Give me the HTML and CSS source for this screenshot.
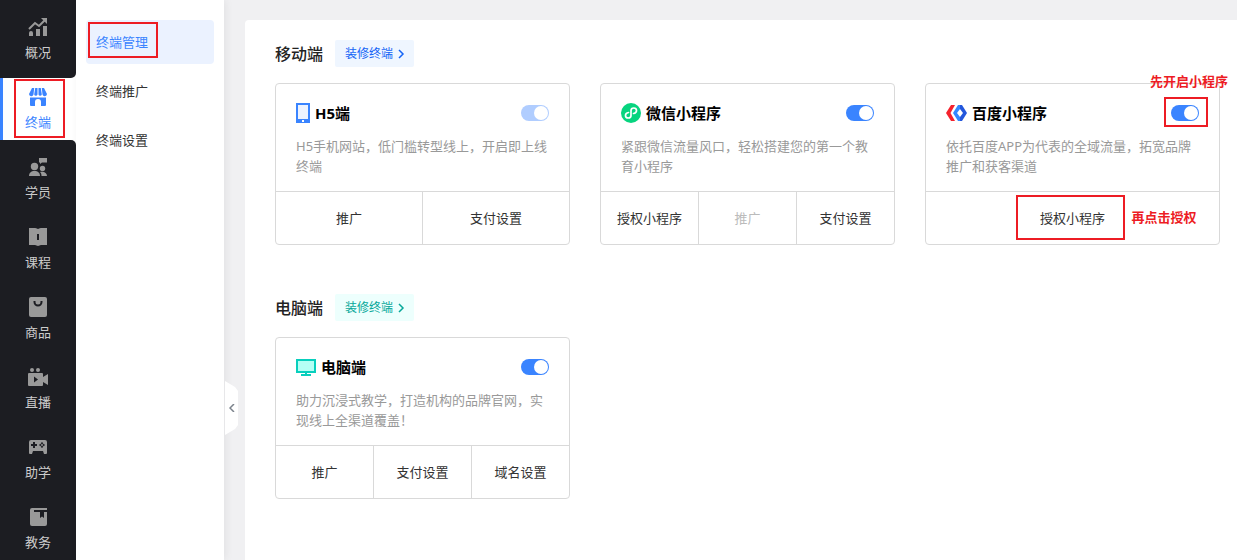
FILE: index.html
```
<!DOCTYPE html>
<html lang="zh-CN">
<head>
    <meta charset="UTF-8">
    <meta name="viewport" content="width=device-width, initial-scale=1.0">
    <title>终端管理</title>
    <link rel="stylesheet" href="styles.css">
</head>
<body>
    <nav class="sidebar">
        <ul>
            <li>
                <a href="#">
                    <svg width="20" height="20" viewBox="0 0 20 20" fill="currentColor">
                        <path d="M1 16a2 2 0 0 1 4 0v3H1zM8 12h4v7H8zM15 9h4v10h-4z"/>
                        <path d="M1 12l6-6 4 3 6-6" fill="none" stroke="currentColor" stroke-width="2"/>
                        <path d="M13 1h6v6z"/>
                    </svg>
                    <span>概况</span>
                </a>
            </li>
            <li class="active">
                <a href="#">
                    <svg width="20" height="20" viewBox="0 0 20 20" fill="currentColor">
                        <path d="M4 1h2.200L5.500 7.500A2.300 2.300 0 0 1 1 7zM7.200 1h2.300v6.500a1.700 1.700 0 0 1-3.300 0zM10.500 1h2.300l1 6.500a1.700 1.700 0 0 1-3.300 0zM13.800 1H16l3 6a2.300 2.300 0 0 1-4.500.500z"/>
                        <path d="M2 10.500h16V18a1 1 0 0 1-1 1h-4v-4a3 3 0 0 0-6 0v4H3a1 1 0 0 1-1-1z"/>
                    </svg>
                    <span>终端</span>
                </a>
                <div class="mark mark-nav"></div>
            </li>
            <li>
                <a href="#">
                    <svg width="20" height="20" viewBox="0 0 20 20" fill="currentColor">
                        <circle cx="6.500" cy="9.500" r="3.700"/>
                        <path d="M1 19c0-3 2-5 5.500-5s5.500 2 5.500 5z"/>
                        <circle cx="14.500" cy="11.500" r="2.700"/>
                        <path d="M12 15c4-1 7 1 7 4h-5.500c0-2-.5-3-1.500-4zM11 1h8v4.500h-5L12 7V5.500h-1z"/>
                    </svg>
                    <span>学员</span>
                </a>
            </li>
            <li>
                <a href="#">
                    <svg width="20" height="20" viewBox="0 0 20 20" fill="currentColor">
                        <path fill-rule="evenodd" d="M1 1h6c2 0 2 1 3 1s1-1 3-1h6v17h-6l-3 1-3-1H1zM9 7v6h2V7z"/>
                    </svg>
                    <span>课程</span>
                </a>
            </li>
            <li>
                <a href="#">
                    <svg width="20" height="20" viewBox="0 0 20 20" fill="currentColor">
                        <rect x="1" width="18" height="20" rx="2"/>
                        <path class="cut-line" d="M6.500 4v1a3.500 3.500 0 0 0 7 0V4"/>
                    </svg>
                    <span>商品</span>
                </a>
            </li>
            <li>
                <a href="#">
                    <svg width="20" height="20" viewBox="0 0 20 20" fill="currentColor">
                        <circle cx="4" cy="3" r="2"/>
                        <circle cx="10" cy="3" r="2"/>
                        <path fill-rule="evenodd" d="M1 6h13a1 1 0 0 1 1 1v3l5-3v11l-5-3v3a1 1 0 0 1-1 1H1a1 1 0 0 1-1-1V7a1 1 0 0 1 1-1zM6 9.500v6l4-3z"/>
                    </svg>
                    <span>直播</span>
                </a>
            </li>
            <li>
                <a href="#">
                    <svg width="20" height="20" viewBox="0 0 20 20" fill="currentColor">
                        <path d="M3 3h14a2 2 0 0 1 2 2v11a1 1 0 0 1-1 1h-2l-1-3H5l-1 3H2a1 1 0 0 1-1-1V5a2 2 0 0 1 2-2z"/>
                        <path class="cut-line" d="M3 8h6M6 5v6"/>
                        <path class="cut" d="M14 5l1.300 1.300L14 7.600l-1.300-1.300zM14 8.400l1.300 1.300L14 11l-1.300-1.300zM12.300 6.700L13.600 8l-1.300 1.300L11 8zM15.700 6.700L17 8l-1.300 1.300L14.400 8z"/>
                    </svg>
                    <span>助学</span>
                </a>
            </li>
            <li>
                <a href="#">
                    <svg width="20" height="20" viewBox="0 0 20 20" fill="currentColor">
                        <path d="M4 1h15v16a2 2 0 0 1-2 2H4a2 2 0 0 1-2-2V3a2 2 0 0 1 2-2z"/>
                        <path class="cut" d="M6 3h13v2h-3v6l-2-1.500-2 1.500V5H6z"/>
                    </svg>
                    <span>教务</span>
                </a>
            </li>
        </ul>
    </nav>

    <nav class="submenu">
        <a href="#" class="current">终端管理</a>
        <a href="#">终端推广</a>
        <a href="#">终端设置</a>
        <div class="mark mark-submenu"></div>
        <button type="button" class="collapse" aria-label="收起">
            <svg width="6" height="8" viewBox="0 0 6 8"><path d="M5 0L1 4l4 4" fill="none" stroke="#7c838c" stroke-width="1.500"/></svg>
        </button>
    </nav>

    <main class="content">
        <section>
            <header class="section-head">
                <h2>移动端</h2>
                <a href="#" class="decorate">装修终端
                    <svg width="7" height="10" viewBox="0 0 7 10"><path d="M1 1l4 4-4 4" fill="none" stroke="currentColor" stroke-width="1.500"/></svg>
                </a>
            </header>
            <div class="cards">
                <article class="card">
                    <div class="card-body">
                        <div class="card-title">
                            <svg width="14" height="20" viewBox="0 0 14 20">
                                <path fill="#3a84ff" d="M0 0h14v20H0z"/>
                                <path fill="#edf3ff" d="M2 2h10v14H2z"/>
                                <path fill="#fff" d="M6 17h2v2H6z"/>
                            </svg>
                            <h3>H5端</h3>
                            <input type="checkbox" class="switch" aria-label="H5端" checked disabled>
                        </div>
                        <p>H5手机网站，低门槛转型线上，开启即上线终端</p>
                    </div>
                    <div class="card-actions">
                        <button type="button">推广</button>
                        <button type="button">支付设置</button>
                    </div>
                </article>

                <article class="card">
                    <div class="card-body">
                        <div class="card-title">
                            <svg width="20" height="20" viewBox="0 0 20 20">
                                <circle cx="10" cy="10" r="10" fill="#07d47f"/>
                                <path d="M7.500 9.500C5.500 9.800 4.500 11 4.500 12.500c0 1.400 1.200 2.500 2.700 2.500s2.800-1.100 2.800-2.500v-5C10 6.100 11.300 5 12.800 5s2.700 1.100 2.700 2.500c0 1.500-1 2.700-3 3" fill="none" stroke="#fff" stroke-width="1.700" stroke-linecap="round"/>
                            </svg>
                            <h3>微信小程序</h3>
                            <input type="checkbox" class="switch" aria-label="微信小程序" checked>
                        </div>
                        <p>紧跟微信流量风口，轻松搭建您的第一个教育小程序</p>
                    </div>
                    <div class="card-actions">
                        <button type="button">授权小程序</button>
                        <button type="button" disabled>推广</button>
                        <button type="button">支付设置</button>
                    </div>
                </article>

                <article class="card">
                    <div class="card-body">
                        <div class="card-title">
                            <svg width="21" height="16" viewBox="0 0 21 16">
                                <path fill="#f5222d" d="M5 0h4L4.500 8 9 16H5L0 8z"/>
                                <path fill="#3388ff" d="M14 0h-2L7 8l5 8h2v-4l-3-4 3-4z"/>
                                <path fill="#2357dc" d="M14 0h2l5 8-5 8h-2v-4l3-4-3-4z"/>
                            </svg>
                            <h3>百度小程序</h3>
                            <div class="marked">
                                <input type="checkbox" class="switch" aria-label="百度小程序" checked>
                                <div class="mark mark-switch"></div>
                                <strong class="note note-top">先开启小程序</strong>
                            </div>
                        </div>
                        <p>依托百度APP为代表的全域流量，拓宽品牌推广和获客渠道</p>
                    </div>
                    <div class="card-actions">
                        <button type="button">授权小程序</button>
                        <div class="mark mark-action"></div>
                        <strong class="note note-side">再点击授权</strong>
                    </div>
                </article>
            </div>
        </section>

        <section>
            <header class="section-head">
                <h2>电脑端</h2>
                <a href="#" class="decorate green">装修终端
                    <svg width="7" height="10" viewBox="0 0 7 10"><path d="M1 1l4 4-4 4" fill="none" stroke="currentColor" stroke-width="1.500"/></svg>
                </a>
            </header>
            <div class="cards">
                <article class="card">
                    <div class="card-body">
                        <div class="card-title">
                            <svg width="20" height="17" viewBox="0 0 20 17">
                                <path fill="#08cfbd" d="M0 0h20v14h-9v1h4v2H5v-2h4v-1H0z"/>
                                <path fill="#b5fff5" d="M2 2h16v10H2z"/>
                            </svg>
                            <h3>电脑端</h3>
                            <input type="checkbox" class="switch" aria-label="电脑端" checked>
                        </div>
                        <p>助力沉浸式教学，打造机构的品牌官网，实现线上全渠道覆盖！</p>
                    </div>
                    <div class="card-actions">
                        <button type="button">推广</button>
                        <button type="button">支付设置</button>
                        <button type="button">域名设置</button>
                    </div>
                </article>
            </div>
        </section>
    </main>
</body>
</html>
```

FILE: styles.css
```
* {
    box-sizing: border-box;
}

body {
    display: flex;
    min-height: 100vh;
    margin: 0;
    background-color: #f0f0f2;
    color: #333;
    font-family: "Noto Sans", "Noto Sans CJK SC", sans-serif;
    font-size: 13px;
    line-height: 20px;
}

h2, h3, p, ul {
    margin: 0;
    padding: 0;
}

a {
    color: inherit;
    text-decoration: none;
}

button {
    padding: 0;
    border: 0;
    background: none;
    color: inherit;
    font: inherit;
    cursor: pointer;
}

/* main navigation */
.sidebar {
    display: flex;
    flex-direction: column;
    flex: 0 0 76px;
    background-color: #fff;
}

.sidebar::after {
    content: "";
    flex: 1;
    background-color: #1c1d22;
}

.sidebar ul {
    list-style: none;
}

.sidebar li {
    position: relative;
    padding-top: 8px;
    background-color: #1c1d22;
    color: #ccc;
}

.sidebar li:has(+ .active) {
    padding-bottom: 8px;
    border-bottom-right-radius: 5px;
}

.sidebar .active {
    padding-top: 0;
    border-left: 3px solid #3a84ff;
    background-color: #fff;
    color: #3a84ff;
}

.sidebar .active + li {
    border-top-right-radius: 5px;
}

.sidebar li a {
    display: flex;
    flex-direction: column;
    align-items: center;
    gap: 5px;
    height: 62px;
    padding-top: 9px;
}

.sidebar .active a {
    margin-left: -3px;
}

.sidebar svg {
    color: #999;
}

.sidebar .active svg {
    color: #3a84ff;
}

.sidebar .cut {
    fill: #1c1d22;
}

.sidebar .cut-line {
    fill: none;
    stroke: #1c1d22;
    stroke-width: 2;
}

/* second level */
.submenu {
    position: relative;
    display: flex;
    flex-direction: column;
    gap: 5px;
    flex: 0 0 148px;
    padding: 20px 10px;
    background-color: #fff;
    box-shadow: 2px 0 8px rgba(0, 0, 0, 0.06);
}

.submenu a {
    padding: 12px 10px;
    border-radius: 4px;
}

.submenu .current {
    background-color: #ebf2ff;
    color: #3a84ff;
}

.collapse {
    position: absolute;
    top: 381px;
    left: 149px;
    display: flex;
    align-items: center;
    justify-content: center;
    width: 13px;
    height: 54px;
    background-color: #fff;
    clip-path: polygon(0 0, 10px 6px, 13px 10px, 13px 44px, 10px 48px, 0 100%);
}

/* content */
.content {
    display: flex;
    flex-direction: column;
    gap: 49px;
    flex: 1;
    min-width: 0;
    margin: 20px 0 0 21px;
    padding: 20px 17px 30px 30px;
    border-top-left-radius: 4px;
    background-color: #fff;
}

.section-head {
    display: flex;
    align-items: center;
    gap: 12px;
    margin-bottom: 16px;
}

.section-head h2 {
    color: #222;
    font-size: 16px;
    font-weight: 500;
}

.decorate {
    display: flex;
    align-items: center;
    gap: 5px;
    height: 27px;
    padding: 0 9px 0 10px;
    border-radius: 2px;
    background-color: #eff6ff;
    color: #1464f6;
    font-size: 12px;
}

.decorate.green {
    background-color: #edfffd;
    color: #08a89a;
}

.cards {
    display: grid;
    grid-template-columns: repeat(3, 1fr);
    gap: 30px;
}

.card {
    border: 1px solid #d9d9d9;
    border-radius: 4px;
}

.card-body {
    padding: 19px 20px 15px;
}

.card-title {
    display: flex;
    align-items: center;
    gap: 5px;
    margin-bottom: 13px;
}

.card-title h3 {
    flex: 1;
    color: #000;
    font-size: 15px;
    font-weight: 700;
}

.card p {
    color: #999;
}

.switch {
    display: block;
    width: 28px;
    height: 16px;
    margin: 0;
    padding: 1px;
    border-radius: 8px;
    background-color: #3a84ff;
    appearance: none;
    cursor: pointer;
}

.switch::before {
    content: "";
    display: block;
    width: 14px;
    height: 14px;
    border-radius: 50%;
    background-color: #fff;
}

.switch:checked::before {
    margin-left: auto;
}

.switch:disabled {
    background-color: #b0cdff;
}

.card-actions {
    position: relative;
    display: flex;
    height: 53px;
    border-top: 1px solid #d9d9d9;
}

.card-actions button {
    flex: 1;
}

.card-actions button + button {
    border-left: 1px solid #d9d9d9;
}

.card-actions button:disabled {
    color: #bbb;
}

/* guide marks drawn over the page */
.mark {
    position: absolute;
    border: 2px solid #ed1c24;
    pointer-events: none;
}

.mark-nav {
    top: 1px;
    left: 11px;
    width: 51px;
    height: 59px;
}

.mark-submenu {
    top: 22px;
    left: 12px;
    width: 70px;
    height: 36px;
}

.marked {
    position: relative;
}

.mark-switch {
    top: -8px;
    left: -7px;
    width: 44px;
    height: 30px;
}

.mark-action {
    top: 3px;
    left: calc(50% - 57px);
    width: 109px;
    height: 45px;
}

.note {
    position: absolute;
    color: #ed1c24;
    font-weight: 700;
    white-space: nowrap;
}

.note-top {
    top: -34px;
    right: -29px;
}

.note-side {
    top: 15px;
    left: calc(50% + 59px);
}
```
